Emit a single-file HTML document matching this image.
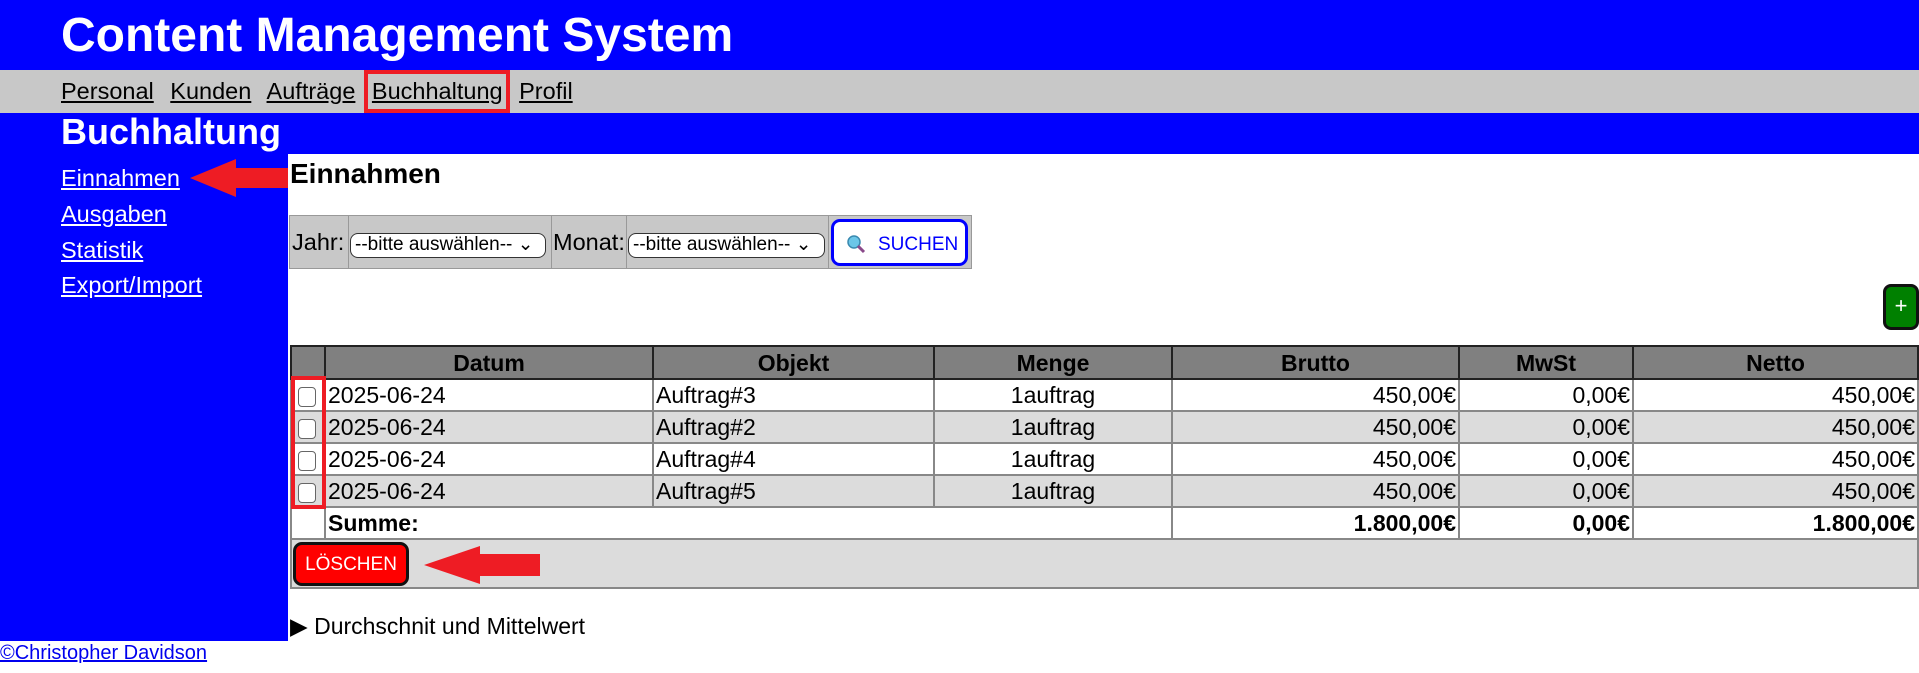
<!DOCTYPE html>
<html><head><meta charset="utf-8"><style>
*{margin:0;padding:0;box-sizing:border-box}
body{width:1919px;height:673px;overflow:hidden;background:#fff;font-family:"Liberation Sans",Arial,sans-serif;font-size:23.5px;color:#000;position:relative}
.a{position:absolute}
a{color:inherit;text-decoration:underline}
#hd{left:0;top:0;width:1919px;height:70px;background:#0000ff;color:#fff;font-weight:bold;font-size:48px;padding-left:61px;line-height:72px}
#nav{left:0;top:70px;width:1919px;height:43px;background:#c8c8c8;line-height:43px;padding-left:61px}
#nav a{margin-right:10px}
#band{left:0;top:113px;width:1919px;height:41px;background:#0000ff;color:#fff;font-weight:bold;font-size:36px;padding-left:61px;line-height:38px}
#side{left:0;top:154px;width:288px;height:487px;background:#0000ff}
.sl{color:#fff;left:61px;font-size:23.5px}
table{border-collapse:collapse}
#dt{left:290px;top:345px;width:1629px}
#dt td,#dt th{border:2px solid #888;height:32px;padding:0 2px;font-size:23px;line-height:26px}
#dt th{background:#808080;border-color:#222;height:33px}
.g td{background:#dcdcdc}
.r{text-align:right}.c{text-align:center}
.cb{display:inline-block;width:18px;height:20px;border:1.5px solid #666;border-radius:4px;background:#fff;vertical-align:middle;margin-left:4px}
.sel{position:absolute;top:233px;height:25px;border:1.5px solid #333;border-radius:8px;background:#fff;font-size:19px;line-height:22px;padding-left:4px}
</style></head><body>
<div class="a" id="hd">Content Management System</div>
<div class="a" id="nav"><a>Personal</a> <a>Kunden</a> <a>Aufträge</a> <a>Buchhaltung</a> <a>Profil</a></div>
<div class="a" style="left:364px;top:70px;width:146px;height:43px;border:4px solid #ee1c24"></div>
<div class="a" id="band">Buchhaltung</div>
<div class="a" id="side"></div>
<a class="a sl" style="top:165px">Einnahmen</a>
<a class="a sl" style="top:201px">Ausgaben</a>
<a class="a sl" style="top:237px">Statistik</a>
<a class="a sl" style="top:272px">Export/Import</a>
<svg class="a" style="left:188px;top:158px" width="100" height="40"><polygon points="2,20 48,1 48,10 100,10 100,30 48,30 48,39" fill="#ee1c24"/></svg>
<div class="a" style="left:290px;top:158px;font-weight:bold;font-size:28px">Einnahmen</div>
<div class="a" style="left:289px;top:215px;width:683px;height:54px;background:#c8c8c8;border:1.5px solid #999"></div>
<div class="a" style="left:348px;top:216px;width:1px;height:52px;background:#999"></div>
<div class="a" style="left:551px;top:216px;width:1px;height:52px;background:#999"></div>
<div class="a" style="left:626px;top:216px;width:1px;height:52px;background:#999"></div>
<div class="a" style="left:828px;top:216px;width:1px;height:52px;background:#999"></div>
<div class="a" style="left:292px;top:229px">Jahr:</div>
<div class="sel" style="left:350px;width:196px">--bitte auswählen-- ⌄</div>
<div class="a" style="left:553px;top:229px">Monat:</div>
<div class="sel" style="left:628px;width:197px">--bitte auswählen-- ⌄</div>
<div class="a" style="left:831px;top:219px;width:137px;height:47px;border:3px solid #0000ff;border-radius:9px;background:#fff;color:#0000ff;font-size:19px;line-height:45px;padding-left:44px">SUCHEN</div>
<svg class="a" style="left:845px;top:233px" width="22" height="22"><circle cx="9" cy="9" r="6" fill="#6cc6e8" stroke="#3a8ab0" stroke-width="1.5"/><line x1="13" y1="13" x2="19" y2="19" stroke="#8a4a8a" stroke-width="3"/></svg>
<div class="a" style="left:1883px;top:284px;width:36px;height:46px;background:#008000;border:3px solid #111;border-radius:8px;color:#fff;font-size:22px;line-height:38px;text-align:center">+</div>
<table class="a" id="dt">
<tr><th style="width:34px"></th><th style="width:328px">Datum</th><th style="width:281px">Objekt</th><th style="width:238px">Menge</th><th style="width:287px">Brutto</th><th style="width:174px">MwSt</th><th>Netto</th></tr>
<tr><td><span class="cb"></span></td><td>2025-06-24</td><td>Auftrag#3</td><td class="c">1auftrag</td><td class="r">450,00€</td><td class="r">0,00€</td><td class="r">450,00€</td></tr>
<tr class="g"><td><span class="cb"></span></td><td>2025-06-24</td><td>Auftrag#2</td><td class="c">1auftrag</td><td class="r">450,00€</td><td class="r">0,00€</td><td class="r">450,00€</td></tr>
<tr><td><span class="cb"></span></td><td>2025-06-24</td><td>Auftrag#4</td><td class="c">1auftrag</td><td class="r">450,00€</td><td class="r">0,00€</td><td class="r">450,00€</td></tr>
<tr class="g"><td><span class="cb"></span></td><td>2025-06-24</td><td>Auftrag#5</td><td class="c">1auftrag</td><td class="r">450,00€</td><td class="r">0,00€</td><td class="r">450,00€</td></tr>
<tr style="font-weight:bold"><td></td><td colspan="3" style="font-weight:bold">Summe:</td><td class="r" style="font-weight:bold">1.800,00€</td><td class="r" style="font-weight:bold">0,00€</td><td class="r" style="font-weight:bold">1.800,00€</td></tr>
<tr class="g"><td colspan="7" style="height:49px"></td></tr>
</table>
<div class="a" style="left:291px;top:376px;width:35px;height:133px;border:4px solid #ee1c24"></div>
<div class="a" style="left:293px;top:542px;width:116px;height:44px;background:#ff0000;border:3px solid #111;border-radius:9px;color:#fff;font-size:19px;line-height:40px;text-align:center">LÖSCHEN</div>
<svg class="a" style="left:422px;top:545px" width="120" height="40"><polygon points="2,20 58,1 58,9 118,9 118,31 58,31 58,39" fill="#ee1c24"/></svg>
<div class="a" style="left:290px;top:613px;font-size:23px">▶ Durchschnit und Mittelwert</div>
<a class="a" style="left:0;top:642px;color:#0000ee;font-size:20px">©Christopher Davidson</a>
</body></html>
